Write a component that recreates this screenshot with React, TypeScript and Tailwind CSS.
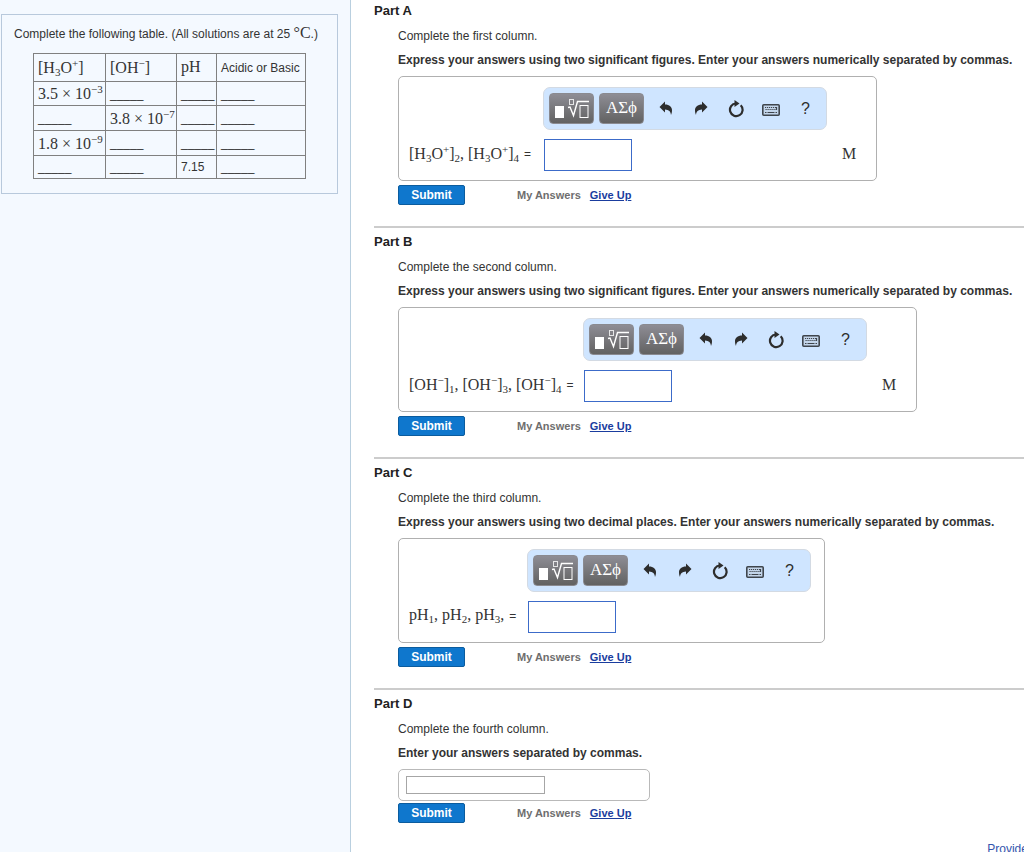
import type { ReactNode } from "react";

function Sup({ children }: { children: ReactNode }) {
  return <span className="align-[6px] text-[11px] leading-none">{children}</span>;
}

function Sub({ children }: { children: ReactNode }) {
  return <span className="align-[-3px] text-[11px] leading-none">{children}</span>;
}

function Math({ children }: { children: ReactNode }) {
  return (
    <span className="whitespace-nowrap font-['Liberation_Serif',serif] text-[16px] leading-none">
      {children}
    </span>
  );
}

function Blank() {
  return <span>_____</span>;
}

function TemplateIcon() {
  return (
    <svg width="35" height="20" viewBox="0 0 35 20" fill="none" stroke="#fff">
      <rect x="1" y="7" width="9" height="12" fill="#fff" stroke="none" />
      <rect x="15.5" y="0.5" width="4" height="5" strokeOpacity="0.8" />
      <path d="M14 8.5l2-.5 3.5 8.500L23.500 2.500h11.500" strokeWidth="1.400" />
      <rect x="26" y="6.500" width="8" height="12" />
    </svg>
  );
}

function UndoIcon() {
  return (
    <svg width="14" height="15" viewBox="0 0 14 15" fill="#2d2d2d">
      <path d="M0.500 6L6 0.500v3c4.500 0 7 2.500 7 5.500 0 2-.3 3.500-1 5-.3-3.500-2-5.300-6-5.500v3z" />
    </svg>
  );
}

function RedoIcon() {
  return (
    <svg width="14" height="15" viewBox="0 0 14 15" fill="#2d2d2d">
      <path d="M13.500 6L8 0.500v3C3.500 3.500 1 6 1 9c0 2 .3 3.500 1 5 .3-3.500 2-5.300 6-5.500v3z" />
    </svg>
  );
}

function ResetIcon() {
  return (
    <svg width="16" height="18" viewBox="0 0 16 18" fill="none">
      <path d="M12.700 5.300A6.300 6.300 0 1 1 8 3.500" stroke="#2d2d2d" strokeWidth="2.200" />
      <path d="M6.500 0L11.500 3.600 6.500 7z" fill="#2d2d2d" />
    </svg>
  );
}

function KeyboardIcon() {
  return (
    <svg width="18" height="12" viewBox="0 0 18 12" fill="none" stroke="#3f454c">
      <rect x="0.800" y="0.800" width="16.400" height="10.400" rx="1" fill="#c3d5ea" strokeWidth="1.600" />
      <path d="M3 3.500h12M3.500 5.500h12" strokeDasharray="1.200 0.800" />
      <path d="M3 8.500h1.500M5.500 8.500h7M13.500 8.500h1.500M14.500 3v3" strokeWidth="1.200" />
    </svg>
  );
}

function Toolbar() {
  const dark =
    "flex h-[31px] w-[45px] items-center justify-center rounded-[4px] border border-[#8a8a90] bg-linear-to-b from-[#8e8d95] to-[#626262] text-white";
  const plain = "flex h-[31px] w-[35px] items-center justify-center";

  return (
    <div className="flex h-[43px] w-fit items-center rounded-[7px] border border-[#d3dae3] bg-[#cfe5ff] pr-[3px] pl-[5px]">
      <button aria-label="Templates" className={dark}>
        <TemplateIcon />
      </button>
      <button className={`${dark} ml-[5px] pb-px font-['Liberation_Serif',serif] text-[17px]`}>
        ΑΣϕ
      </button>
      <button aria-label="Undo" className={`${plain} ml-1`}>
        <UndoIcon />
      </button>
      <button aria-label="Redo" className={plain}>
        <RedoIcon />
      </button>
      <button aria-label="Reset" className={plain}>
        <ResetIcon />
      </button>
      <button aria-label="Keyboard shortcuts" className={`${plain} pt-[3px]`}>
        <KeyboardIcon />
      </button>
      <button className={`${plain} text-[16px] text-[#2d2d2d]`}>?</button>
    </div>
  );
}

type AnswerBoxProps = {
  id: string;
  label: ReactNode;
  labelWidth: string;
  unit?: string;
};

function AnswerBox({ id, label, labelWidth, unit }: AnswerBoxProps) {
  return (
    <div className="mb-1 flex w-fit rounded-[5px] border border-[#b0b0b0] pt-[10px] pr-[13px] pb-[9px] pl-[10px]">
      <label
        htmlFor={id}
        className={`flex h-8 shrink-0 items-center self-end pb-[3px] whitespace-nowrap ${labelWidth}`}
      >
        <Math>{label}</Math>
        <span className="ml-[5px]">=</span>
      </label>
      <div>
        <Toolbar />
        <input
          id={id}
          className="mt-[9px] ml-px block h-8 w-[88px] border border-[#3c6bc9] bg-white px-1 outline-none"
        />
      </div>
      {unit && (
        <div className="mr-[7px] ml-[15px] flex h-8 items-center self-end pb-[3px]">
          <Math>{unit}</Math>
        </div>
      )}
    </div>
  );
}

type PartProps = {
  title: string;
  text: string;
  hint: string;
  first?: boolean;
  children: ReactNode;
};

function Part({ title, text, hint, first, children }: PartProps) {
  return (
    <section className={first ? "pt-[3px] pb-[21px]" : "border-t-2 border-[#cccccc] pt-[6px] pb-[21px]"}>
      <h2 className="text-[13px] leading-4 font-bold text-[#222]">{title}</h2>
      <div className="pl-6">
        <p className="mt-[9px] leading-4">{text}</p>
        <p className="mt-2 mb-2 leading-4 font-bold whitespace-nowrap">{hint}</p>
        {children}
        <div className="flex h-5 items-center text-[11px] font-bold">
          <button className="h-5 w-[67px] rounded-[2px] border border-[#0b5c9e] bg-[#0f77cd] text-[12px] leading-4 text-white">
            Submit
          </button>
          <span className="ml-[52px] text-[#6e6e6e]">My Answers</span>
          <a href="#" className="ml-[9px] text-[#1a3d9e] underline">
            Give Up
          </a>
        </div>
      </div>
    </section>
  );
}

const th = "border border-[#808080] px-1 text-left align-middle font-normal";
const td = "border border-[#808080] px-1 align-middle";

function ConcentrationTable() {
  return (
    <table className="mt-[11px] ml-[19px] w-[272px] table-fixed border-collapse border border-[#222] leading-4">
      <colgroup>
        <col className="w-[72px]" />
        <col className="w-[71px]" />
        <col className="w-[40px]" />
        <col className="w-[89px]" />
      </colgroup>
      <thead>
        <tr className="h-7">
          <th className={th}>
            <Math>[H<Sub>3</Sub>O<Sup>+</Sup>]</Math>
          </th>
          <th className={th}>
            <Math>[OH<Sup>−</Sup>]</Math>
          </th>
          <th className={th}>
            <Math>pH</Math>
          </th>
          <th className={`${th} whitespace-nowrap`}>Acidic or Basic</th>
        </tr>
      </thead>
      <tbody>
        <tr className="h-6">
          <td className={td}>
            <Math>3.5 × 10<Sup>−3</Sup></Math>
          </td>
          <td className={td}><Blank /></td>
          <td className={td}><Blank /></td>
          <td className={td}><Blank /></td>
        </tr>
        <tr className="h-[25px]">
          <td className={td}><Blank /></td>
          <td className={td}>
            <Math>3.8 × 10<Sup>−7</Sup></Math>
          </td>
          <td className={td}><Blank /></td>
          <td className={td}><Blank /></td>
        </tr>
        <tr className="h-[25px]">
          <td className={td}>
            <Math>1.8 × 10<Sup>−9</Sup></Math>
          </td>
          <td className={td}><Blank /></td>
          <td className={td}><Blank /></td>
          <td className={td}><Blank /></td>
        </tr>
        <tr className="h-[23px]">
          <td className={td}><Blank /></td>
          <td className={td}><Blank /></td>
          <td className={td}>7.15</td>
          <td className={td}><Blank /></td>
        </tr>
      </tbody>
    </table>
  );
}

export default function App() {
  return (
    <div className="flex min-h-screen overflow-x-clip bg-white font-['Liberation_Sans',Arial,sans-serif] text-[12px] text-[#333]">
      <aside className="w-[351px] shrink-0 border-r border-[#b9cfdf] bg-[#f4f9ff] pt-[14px] pl-px">
        <div className="mr-3 h-[180px] border border-[#b8c9dc] pt-[10px] pl-3">
          <p className="leading-4 whitespace-nowrap">
            Complete the following table. (All solutions are at 25 <Math>°C</Math>.)
          </p>
          <ConcentrationTable />
        </div>
      </aside>

      <main className="min-w-0 flex-1 pl-[23px]">
        <Part
          first
          title="Part A"
          text="Complete the first column."
          hint="Express your answers using two significant figures. Enter your answers numerically separated by commas."
        >
          <AnswerBox
            id="part-a"
            labelWidth="w-[134px]"
            unit="M"
            label={
              <>
                [H<Sub>3</Sub>O<Sup>+</Sup>]<Sub>2</Sub>, [H<Sub>3</Sub>O<Sup>+</Sup>]<Sub>4</Sub>
              </>
            }
          />
        </Part>

        <Part
          title="Part B"
          text="Complete the second column."
          hint="Express your answers using two significant figures. Enter your answers numerically separated by commas."
        >
          <AnswerBox
            id="part-b"
            labelWidth="w-[174px]"
            unit="M"
            label={
              <>
                [OH<Sup>−</Sup>]<Sub>1</Sub>, [OH<Sup>−</Sup>]<Sub>3</Sub>, [OH<Sup>−</Sup>]<Sub>4</Sub>
              </>
            }
          />
        </Part>

        <Part
          title="Part C"
          text="Complete the third column."
          hint="Express your answers using two decimal places. Enter your answers numerically separated by commas."
        >
          <AnswerBox
            id="part-c"
            labelWidth="w-[118px]"
            label={
              <>
                pH<Sub>1</Sub>, pH<Sub>2</Sub>, pH<Sub>3</Sub>,
              </>
            }
          />
        </Part>

        <Part
          title="Part D"
          text="Complete the fourth column."
          hint="Enter your answers separated by commas."
        >
          <div className="mb-[2px] w-[252px] rounded-[5px] border border-[#b9b9b9] px-[7px] py-[6px]">
            <input
              aria-label="Fourth column answers"
              className="block h-[18px] w-[139px] border border-[#a6a6a6] bg-white px-1 outline-none"
            />
          </div>
        </Part>

        <div className="-mt-[3px] flex justify-end">
          <a href="#" className="-mr-[60px] leading-4 whitespace-nowrap text-[#3355ad]">
            Provide Feedback
          </a>
        </div>
      </main>
    </div>
  );
}
